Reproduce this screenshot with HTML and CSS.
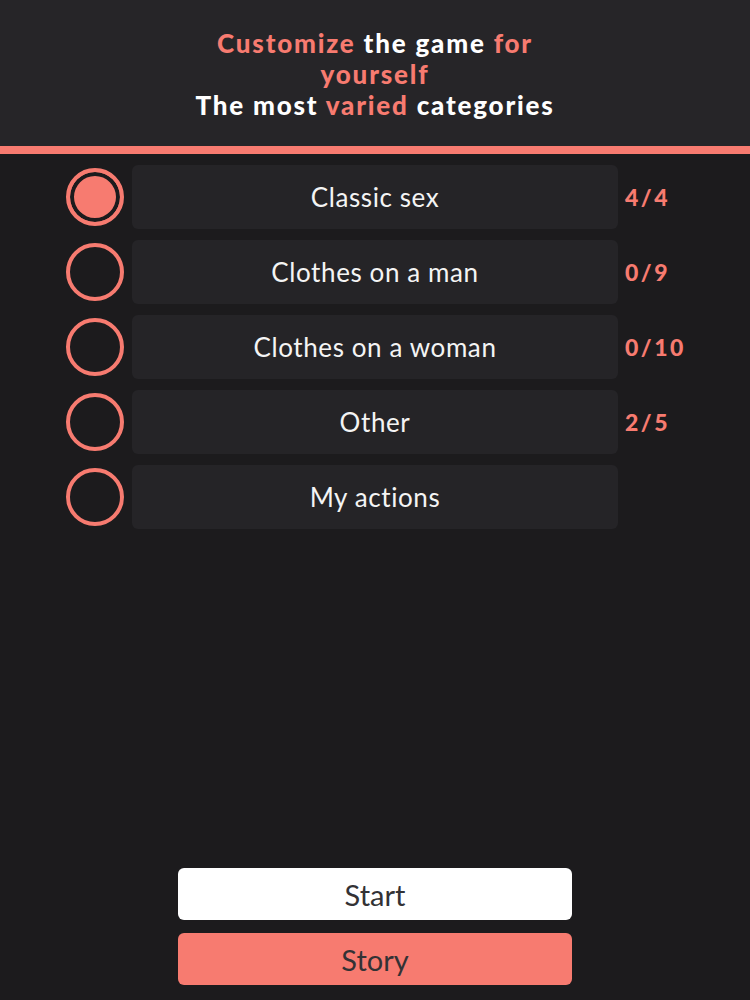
FILE: index.html
```html
<!DOCTYPE html>
<html lang="en">
<head>
  <meta charset="UTF-8">
  <title>Categories</title>
  <link rel="stylesheet" href="styles.css">
</head>
<body>

<div class="cabecera">
  <h2>
    <span class="acento">Customize</span> the game <span class="acento">for<br>yourself</span><br>
    The most <span class="acento">varied</span> categories
  </h2>
</div>

<div class="lista">
  <div class="fila">
    <span class="marca activa"></span>
    <div class="caja">Classic sex</div>
    <span class="cuenta">4/4</span>
  </div>
  <div class="fila">
    <span class="marca"></span>
    <div class="caja">Clothes on a man</div>
    <span class="cuenta">0/9</span>
  </div>
  <div class="fila">
    <span class="marca"></span>
    <div class="caja">Clothes on a woman</div>
    <span class="cuenta">0/10</span>
  </div>
  <div class="fila">
    <span class="marca"></span>
    <div class="caja">Other</div>
    <span class="cuenta">2/5</span>
  </div>
  <div class="fila">
    <span class="marca"></span>
    <div class="caja">My actions</div>
    <span class="cuenta"></span>
  </div>
</div>

<div class="botones">
  <button class="boton blanco">Start</button>
  <button class="boton coral">Story</button>
</div>

</body>
</html>
```

FILE: styles.css
```css
body {
  margin: 0;
  padding: 0;
  font-family: 'Lato', 'Noto Sans', sans-serif;
  background-color: #1c1b1d;
  color: #f4f4f4;
  display: flex;
  flex-direction: column;
  height: 100vh;
}

.cabecera {
  background-color: #262528;
  padding: 28px 0 25px;
  border-bottom: 8px solid #f77b70;
  text-align: center;
}

h2 {
  margin: 0;
  font-size: 26px;
  line-height: 31px;
  font-weight: 900;
  color: #ffffff;
  letter-spacing: 1.8px;
}

.acento {
  color: #f77b70;
}

.lista {
  flex: 1;
  padding-top: 11px;
  display: flex;
  flex-direction: column;
  gap: 11px;
}

.fila {
  display: flex;
  align-items: center;
  padding-left: 66px;
}

.marca {
  width: 50px;
  height: 50px;
  border: 4px solid #f77b70;
  border-radius: 50%;
  flex-shrink: 0;
}

.marca.activa {
  background-color: #f77b70;
  box-shadow: inset 0 0 0 4px #1c1b1d;
}

.caja {
  margin-left: 8px;
  width: 486px;
  height: 64px;
  background-color: #252427;
  border-radius: 6px;
  display: flex;
  align-items: center;
  justify-content: center;
  font-size: 26px;
  letter-spacing: 0.6px;
}

.cuenta {
  margin-left: 7px;
  font-size: 23px;
  font-weight: 900;
  letter-spacing: 2.5px;
  color: #f77b70;
}

.botones {
  display: flex;
  flex-direction: column;
  align-items: center;
  gap: 13px;
  padding-bottom: 15px;
}

.boton {
  width: 394px;
  height: 52px;
  border: none;
  border-radius: 6px;
  font-family: 'Lato', 'Noto Sans', sans-serif;
  font-size: 29px;
  color: #333235;
}

.blanco {
  background-color: #ffffff;
}

.coral {
  background-color: #f77b70;
}
```
